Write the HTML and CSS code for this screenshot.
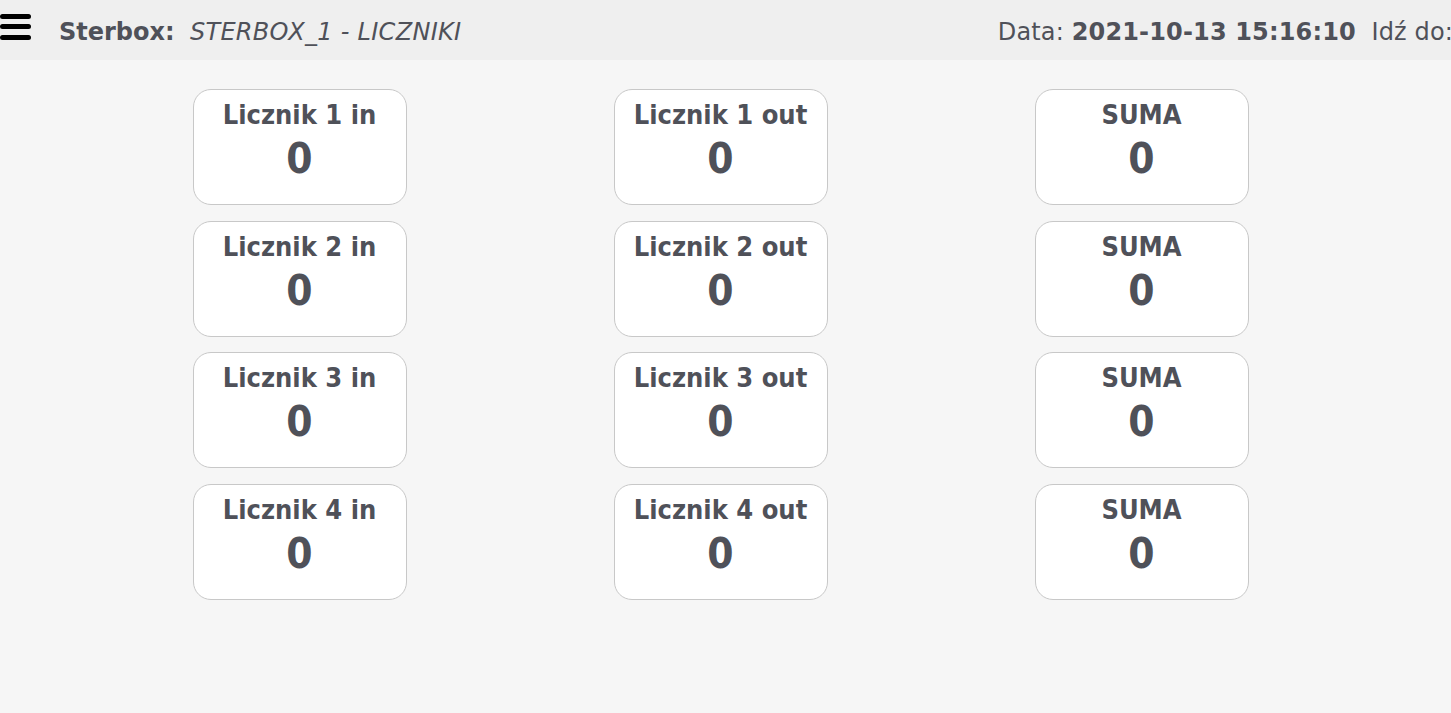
FILE: index.html
```html
<!DOCTYPE html>
<html lang="pl">
<head>
<meta charset="utf-8">
<title>Sterbox - Liczniki</title>
<link rel="stylesheet" href="styles.css">
</head>
<body>
<header class="topbar">
  <div class="menu-icon" aria-label="menu">
    <span></span><span></span><span></span>
  </div>
  <div class="title"><b>Sterbox:</b>&nbsp; <i>STERBOX_1 - LICZNIKI</i></div>
  <div class="date">Data: <b>2021-10-13 15:16:10</b>&nbsp; Idź do:</div>
</header>
<main class="grid">
  <div class="card"><div class="name">Licznik 1 in</div><div class="val">0</div></div>
  <div class="card"><div class="name">Licznik 1 out</div><div class="val">0</div></div>
  <div class="card"><div class="name">SUMA</div><div class="val">0</div></div>
  <div class="card"><div class="name">Licznik 2 in</div><div class="val">0</div></div>
  <div class="card"><div class="name">Licznik 2 out</div><div class="val">0</div></div>
  <div class="card"><div class="name">SUMA</div><div class="val">0</div></div>
  <div class="card"><div class="name">Licznik 3 in</div><div class="val">0</div></div>
  <div class="card"><div class="name">Licznik 3 out</div><div class="val">0</div></div>
  <div class="card"><div class="name">SUMA</div><div class="val">0</div></div>
  <div class="card"><div class="name">Licznik 4 in</div><div class="val">0</div></div>
  <div class="card"><div class="name">Licznik 4 out</div><div class="val">0</div></div>
  <div class="card"><div class="name">SUMA</div><div class="val">0</div></div>
</main>
</body>
</html>
```
FILE: styles.css
```css
html, body {
  margin: 0;
  padding: 0;
}
body {
  background: #f6f6f6;
  color: #4f5159;
  font-family: "DejaVu Sans Condensed", "DejaVu Sans", sans-serif;
  overflow: hidden;
  width: 1451px;
  height: 713px;
}
.topbar {
  height: 60px;
  background: #efefef;
  display: flex;
  align-items: center;
  white-space: nowrap;
  overflow: hidden;
  font-family: "DejaVu Sans", sans-serif;
}
.menu-icon {
  width: 31px;
  height: 26px;
  display: flex;
  flex-direction: column;
  justify-content: space-between;
  margin-top: -7px;
  flex: none;
}
.menu-icon span {
  display: block;
  height: 5px;
  background: #000;
  border-radius: 3px;
}
.title {
  margin-left: 28px;
  margin-top: 3px;
  font-size: 24px;
  flex: none;
}
.title b { font-weight: bold; }
.title i { font-style: italic; letter-spacing: 0.3px; }
.date {
  margin-left: auto;
  margin-right: -2px;
  margin-top: 3px;
  font-size: 24px;
  letter-spacing: 0.15px;
  flex: none;
}
.grid {
  display: grid;
  grid-template-columns: repeat(3, 421px);
  justify-items: center;
  row-gap: 15.7px;
  padding: 29px 0 0 89px;
}
.card {
  box-sizing: border-box;
  width: 214px;
  height: 116px;
  background: #fff;
  border: 1px solid #c8c8c8;
  border-radius: 18px;
  text-align: center;
  font-weight: bold;
}
.name {
  font-size: 27px;
  line-height: 30px;
  margin-top: 10px;
}
.val {
  font-size: 42px;
  line-height: 46px;
  margin-top: 6px;
}
```
